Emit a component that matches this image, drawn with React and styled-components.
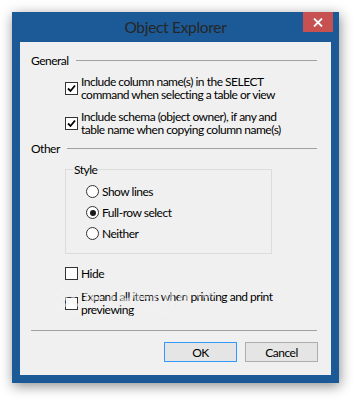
import React from "react";
import styled, { createGlobalStyle } from "styled-components";

const GlobalStyle = createGlobalStyle`
  html, body {
    margin: 0;
    padding: 0;
    background: #ffffff;
  }
  body {
    font-family: "Segoe UI", Lato, "Noto Sans", sans-serif;
    font-size: 12px;
    letter-spacing: -0.5px;
    color: #000;
  }
`;

const Page = styled.div`
  width: 359px;
  height: 403px;
  padding: 12px 0 0 12px;
  box-sizing: border-box;
`;

const Window = styled.div`
  position: relative;
  width: 327px;
  height: 371px;
  box-sizing: border-box;
  background: #1b5a96;
  padding: 0 8px 8px 8px;
  display: flex;
  flex-direction: column;
  box-shadow: 1px 3px 12px rgba(0, 0, 0, 0.45);
`;

const TitleBar = styled.div`
  position: relative;
  height: 30px;
  padding-bottom: 1px;
  box-sizing: border-box;
  display: flex;
  align-items: center;
  justify-content: center;
  font-size: 15.5px;
  letter-spacing: -0.3px;
  color: #262626;
`;

const CloseButton = styled.div`
  position: absolute;
  top: 0;
  right: -2px;
  width: 30px;
  height: 20px;
  background: #c75050;
  display: flex;
  align-items: center;
  justify-content: center;
`;

const Client = styled.div`
  flex: 1;
  background: #f0f0f0;
  padding: 0 14px 0 11px;
  display: flex;
  flex-direction: column;
`;

const SectionHeader = styled.div`
  height: 16px;
  margin-top: ${(p) => p.$top}px;
  display: flex;
  align-items: center;
  gap: 7px;
  &::after {
    content: "";
    flex: 1;
    border-top: 1px solid #a0a0a0;
  }
`;

const CheckRow = styled.label`
  display: flex;
  align-items: center;
  gap: 3px;
  margin-left: 34px;
  margin-top: ${(p) => p.$top}px;
  line-height: 13px;
  white-space: nowrap;
`;

const Box = styled.span`
  width: 13px;
  height: 13px;
  box-sizing: border-box;
  border: 1px solid #333;
  background: #fff;
  flex-shrink: 0;
  display: flex;
  align-items: center;
  justify-content: center;
`;

const GroupBox = styled.fieldset`
  margin: 7px 0 0 34px;
  width: 207px;
  box-sizing: border-box;
  border: 1px solid #dcdcdc;
  padding: 0 0 9px 7px;
  legend {
    padding: 0 1px;
    line-height: 13px;
  }
`;

const RadioRow = styled.label`
  display: flex;
  align-items: center;
  gap: 3px;
  height: 21px;
  margin-left: 13px;
  &:first-of-type {
    margin-top: 5px;
  }
`;

const Radio = styled.span`
  width: 13px;
  height: 13px;
  box-sizing: border-box;
  border-radius: 50%;
  border: 1px solid #333;
  background: #fff;
  display: flex;
  align-items: center;
  justify-content: center;
  &::after {
    content: "";
    width: 6px;
    height: 6px;
    border-radius: 50%;
    background: ${(p) => (p.$on ? "#1a1a1a" : "transparent")};
  }
`;

const Separator = styled.div`
  margin-top: 14px;
  border-top: 1px solid #a0a0a0;
`;

const ButtonRow = styled.div`
  display: flex;
  justify-content: flex-end;
  gap: 8px;
  margin: 11px -1px 0 0;
`;

const Button = styled.div`
  width: 73px;
  height: 20px;
  box-sizing: border-box;
  border: 1px solid ${(p) => (p.$focused ? "#3399ff" : "#adadad")};
  background: #e5e5e5;
  display: flex;
  align-items: center;
  justify-content: center;
`;

const Watermark = styled.div`
  position: absolute;
  left: 42px;
  top: 272px;
  font-family: "Liberation Sans", sans-serif;
  font-weight: bold;
  font-size: 25px;
  letter-spacing: -0.5px;
  color: rgba(255, 255, 255, 0.55);
  text-shadow: 0 0 1px rgba(0, 0, 0, 0.06);
  pointer-events: none;
  span {
    display: block;
    font-size: 11px;
    font-weight: normal;
    letter-spacing: 0.3px;
    margin: -2px 0 0 20px;
  }
`;

const Check = () => (
  <svg width="9" height="9" viewBox="0 0 9 9">
    <path d="M1 4.5 L3.5 7 L8 1.5" fill="none" stroke="#000" strokeWidth="1.8" />
  </svg>
);

const CheckBox = ({ checked, top, children }) => (
  <CheckRow $top={top}>
    <Box>{checked && <Check />}</Box>
    <span>{children}</span>
  </CheckRow>
);

export default function App() {
  return (
    <Page>
      <GlobalStyle />
      <Window>
        <TitleBar>
          Object Explorer
          <CloseButton>
            <svg width="10" height="9" viewBox="0 0 10 9">
              <path d="M1 0.5 L9 8.5 M9 0.5 L1 8.5" stroke="#fff" strokeWidth="1.8" />
            </svg>
          </CloseButton>
        </TitleBar>
        <Client>
          <SectionHeader $top={10}>General</SectionHeader>
          <CheckBox checked top={7}>
            Include column name(s) in the SELECT
            <br />
            command when selecting a table or view
          </CheckBox>
          <CheckBox checked top={9}>
            Include schema (object owner), if any and
            <br />
            table name when copying column name(s)
          </CheckBox>
          <SectionHeader $top={4}>Other</SectionHeader>
          <GroupBox>
            <legend>Style</legend>
            <RadioRow>
              <Radio />
              Show lines
            </RadioRow>
            <RadioRow>
              <Radio $on />
              Full-row select
            </RadioRow>
            <RadioRow>
              <Radio />
              Neither
            </RadioRow>
          </GroupBox>
          <CheckBox top={13}>Hide</CheckBox>
          <CheckBox top={10}>
            Expand all items when printing and print
            <br />
            previewing
          </CheckBox>
          <Separator />
          <ButtonRow>
            <Button $focused>OK</Button>
            <Button>Cancel</Button>
          </ButtonRow>
        </Client>
        <Watermark>
          SOFTPEDIA™
          <span>www.softpedia.com</span>
        </Watermark>
      </Window>
    </Page>
  );
}
